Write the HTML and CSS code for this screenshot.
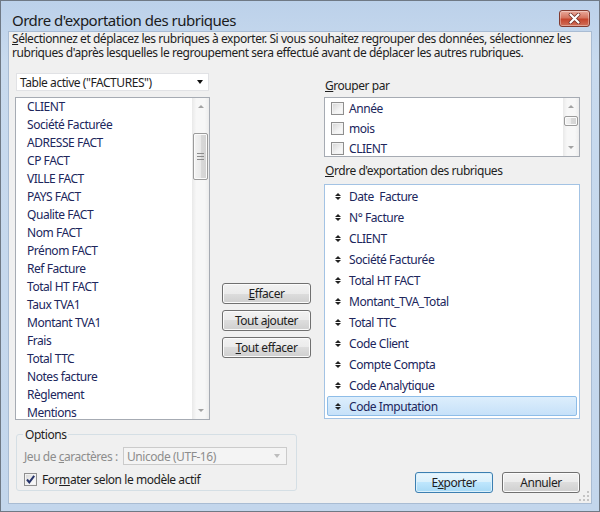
FILE: index.html
```html
<!DOCTYPE html>
<html lang="fr">
<head>
<meta charset="utf-8">
<title>Ordre d'exportation des rubriques</title>
<link rel="stylesheet" href="styles.css">
</head>
<body>
<div class="window">
  <div class="titlebar">
    <span class="title">Ordre d'exportation des rubriques</span>
    <div class="close">
      <svg width="13" height="11" viewBox="0 0 13 11"><path d="M2.5 1.5L10.5 9.5M10.5 1.5L2.5 9.5" stroke="#6b2b22" stroke-width="3.6" stroke-linecap="round"/><path d="M2.5 1.5L10.5 9.5M10.5 1.5L2.5 9.5" stroke="#ffffff" stroke-width="2.2" stroke-linecap="round"/></svg>
    </div>
  </div>
  <div class="client">
    <p class="desc"><u>S</u>électionnez et déplacez les rubriques à exporter. Si vous souhaitez regrouper des données, sélectionnez les<br>rubriques d'après lesquelles le regroupement sera effectué avant de déplacer les autres rubriques.</p>
    <div class="main">
      <div class="col-left">
        <div class="combo"><span>Table active ("FACTURES")</span><span class="combo-arrow"></span></div>
        <div class="list fields">
          <ul>
            <li>CLIENT</li>
            <li>Société Facturée</li>
            <li>ADRESSE FACT</li>
            <li>CP FACT</li>
            <li>VILLE FACT</li>
            <li>PAYS FACT</li>
            <li>Qualite FACT</li>
            <li>Nom FACT</li>
            <li>Prénom FACT</li>
            <li>Ref Facture</li>
            <li>Total HT FACT</li>
            <li>Taux TVA1</li>
            <li>Montant TVA1</li>
            <li>Frais</li>
            <li>Total TTC</li>
            <li>Notes facture</li>
            <li>Règlement</li>
            <li>Mentions</li>
          </ul>
          <div class="vscroll">
            <div class="sb-btn"><span class="tri-up"></span></div>
            <div class="sb-track big"><div class="thumb"><span class="grip"></span></div></div>
            <div class="sb-btn"><span class="tri-down"></span></div>
          </div>
        </div>
      </div>
      <div class="col-mid">
        <button class="btn"><u>E</u>ffacer</button>
        <button class="btn">Tout a<u>j</u>outer</button>
        <button class="btn"><u>T</u>out effacer</button>
      </div>
      <div class="col-right">
        <div class="lbl"><u>G</u>rouper par</div>
        <div class="list group">
          <ul>
            <li><span class="cb"></span>Année</li>
            <li><span class="cb"></span>mois</li>
            <li><span class="cb"></span>CLIENT</li>
          </ul>
          <div class="vscroll">
            <div class="sb-btn"><span class="tri-up"></span></div>
            <div class="sb-track small"><div class="thumb"></div></div>
            <div class="sb-btn"><span class="tri-down"></span></div>
          </div>
        </div>
        <div class="lbl lbl2"><u>O</u>rdre d'exportation des rubriques</div>
        <div class="list order">
          <ul>
            <li><span class="ud"></span>Date&nbsp; Facture</li>
            <li><span class="ud"></span>N° Facture</li>
            <li><span class="ud"></span>CLIENT</li>
            <li><span class="ud"></span>Société Facturée</li>
            <li><span class="ud"></span>Total HT FACT</li>
            <li><span class="ud"></span>Montant_TVA_Total</li>
            <li><span class="ud"></span>Total TTC</li>
            <li><span class="ud"></span>Code Client</li>
            <li><span class="ud"></span>Compte Compta</li>
            <li><span class="ud"></span>Code Analytique</li>
            <li class="sel"><span class="ud"></span>Code Imputation</li>
          </ul>
        </div>
      </div>
    </div>
    <div class="footer">
      <fieldset class="options">
        <legend>Options</legend>
        <div class="row">
          <span class="dis-label">Jeu de <u>c</u>aractères :</span>
          <div class="combo disabled"><span>Unicode (UTF-16)</span><span class="combo-arrow"></span></div>
        </div>
        <div class="row row2">
          <span class="cb checked"><svg width="11" height="11" viewBox="0 0 11 11"><path d="M2 5.5L4.3 8.3L9.2 1.8" fill="none" stroke="#27346a" stroke-width="2"/></svg></span>
          <span>For<u>m</u>ater selon le modèle actif</span>
        </div>
      </fieldset>
      <div class="actions">
        <button class="btn default">E<u>x</u>porter</button>
        <button class="btn">Annuler</button>
      </div>
    </div>
    <svg class="gripper" width="12" height="12" viewBox="0 0 12 12">
      <g fill="#c4c4c4"><rect x="9" y="1" width="2" height="2"/><rect x="5" y="5" width="2" height="2"/><rect x="9" y="5" width="2" height="2"/><rect x="1" y="9" width="2" height="2"/><rect x="5" y="9" width="2" height="2"/><rect x="9" y="9" width="2" height="2"/></g>
    </svg>
  </div>
</div>
</body>
</html>
```
FILE: styles.css
```css
* { box-sizing: border-box; }

body {
  margin: 0;
  font-family: "Noto Sans", "Open Sans", sans-serif;
  font-size: 12px;
  letter-spacing: -0.45px;
  color: #1e1e1e;
}

.window {
  width: 600px;
  height: 512px;
  border: 1px solid #6f7985;
  background: linear-gradient(#bcd1ea, #c8daee 60px, #c3d6ec);
  display: flex;
  flex-direction: column;
}

.titlebar {
  height: 30px;
  display: flex;
  align-items: flex-start;
  padding: 9px 9px 0 11px;
}

.title {
  font-size: 15px;
  line-height: 20px;
  letter-spacing: -0.5px;
  color: #1b1b1b;
}

.close {
  margin-left: auto;
  width: 31px;
  height: 17px;
  border: 1px solid #823b30;
  border-radius: 3px;
  background: linear-gradient(#e9a99b, #d57560 45%, #c5452d 55%, #d0705a);
  box-shadow: inset 0 0 0 1px rgba(255,255,255,0.35);
  display: flex;
  align-items: center;
  justify-content: center;
}

.client {
  position: relative;
  margin: 0 7px;
  height: 473px;
  background: #f0f0f0;
  border: 1px solid #a9bcd3;
}

.desc {
  margin: 0;
  padding-left: 3px;
  line-height: 14px;
  white-space: nowrap;
  color: #1e1e1e;
}

.main {
  display: flex;
  margin-top: 13px;
  padding-left: 6px;
}

.col-left {
  width: 195px;
  display: flex;
  flex-direction: column;
}

.combo {
  height: 18px;
  margin: 0 1px;
  background: #fff;
  border: 1px solid #e1e2e5;
  display: flex;
  align-items: center;
  padding-left: 3px;
  color: #1e1e1e;
  white-space: nowrap;
}

.combo-arrow {
  margin-left: auto;
  margin-right: 5px;
  width: 0;
  height: 0;
  border-left: 3.5px solid transparent;
  border-right: 3.5px solid transparent;
  border-top: 4px solid #111;
}

.list {
  background: #fff;
  border: 1px solid #a6abb3;
  display: flex;
  overflow: hidden;
}

.list ul {
  flex: 1;
  margin: 0;
  padding: 0;
  list-style: none;
  color: #20265c;
}

.fields {
  margin-top: 6px;
  height: 323px;
}

.fields ul { padding-left: 11px; }

.fields li {
  height: 18px;
  line-height: 18px;
  white-space: nowrap;
}

.vscroll {
  width: 17px;
  display: flex;
  flex-direction: column;
  background: linear-gradient(90deg, #e9e9e9, #f7f7f7 25%, #f7f7f7 75%, #ececec);
}

.group .vscroll { width: 16px; }

.sb-btn {
  height: 17px;
  display: flex;
  align-items: center;
  justify-content: center;
}

.tri-up, .tri-down {
  width: 0;
  height: 0;
  border-left: 3px solid transparent;
  border-right: 3px solid transparent;
}
.tri-up { border-bottom: 3px solid #a3a3a3; }
.tri-down { border-top: 3px solid #a3a3a3; }

.sb-track { flex: 1; }

.thumb {
  margin: 0 1px;
  border: 1px solid #9b9b9b;
  border-radius: 2px;
  background: linear-gradient(90deg, #f4f4f4, #e9e9e9 50%, #d9d9d9 51%, #d3d3d3);
  box-shadow: inset 0 0 0 1px #fbfbfb;
  display: flex;
  align-items: center;
  justify-content: center;
}

.big .thumb { margin-top: 18px; height: 47px; }
.small .thumb { margin-top: 1px; height: 10px; }

.grip {
  width: 7px;
  height: 7px;
  background: linear-gradient(#8c8c8c 0 1px, transparent 1px 3px, #8c8c8c 3px 4px, transparent 4px 6px, #8c8c8c 6px 7px);
}

.col-mid {
  width: 89px;
  margin-left: 12px;
  padding-top: 210px;
  display: flex;
  flex-direction: column;
  gap: 6px;
}

.btn {
  height: 21px;
  padding: 0;
  font: inherit;
  letter-spacing: inherit;
  color: #1e1e1e;
  border: 1px solid #707070;
  border-radius: 3px;
  background: linear-gradient(#f2f2f2, #ebebeb 50%, #dddddd 50%, #cfcfcf);
  box-shadow: inset 0 0 0 1px #fbfbfb;
}

.btn.default {
  border-color: #3c7fb1;
  background: linear-gradient(#eaf6fd, #d9f0fc 50%, #bee6fd 50%, #a7d9f5);
  box-shadow: inset 0 0 0 1px #dbf0fb;
}

.col-right {
  width: 256px;
  margin-left: 13px;
}

.lbl {
  height: 15px;
  line-height: 15px;
  margin-top: 5px;
  padding-left: 1px;
}

.lbl2 { margin-top: 6px; }

.group {
  margin-top: 4px;
  height: 60px;
}

.group li {
  height: 20px;
  display: flex;
  align-items: center;
  padding-left: 6px;
  white-space: nowrap;
}

.cb {
  width: 13px;
  height: 13px;
  border: 1px solid #8f8f8f;
  background: linear-gradient(135deg, #d4d4d4, #f3f3f3 60%, #fbfbfb);
  box-shadow: inset 0 0 0 1px #f2f2f2;
  margin-right: 5px;
  flex-shrink: 0;
}

.order {
  margin-top: 6px;
  height: 235px;
  border-color: #a3c3e4;
}

.order ul { padding: 1px 2px; }

.order li {
  height: 20px;
  margin-bottom: 1px;
  display: flex;
  align-items: center;
  padding-left: 8px;
  border: 1px solid transparent;
  border-radius: 2px;
  white-space: nowrap;
}

.order li.sel {
  background: linear-gradient(#ddeefc, #c6e1f9);
  border-color: #8ebde8;
}

.ud {
  width: 6px;
  margin-right: 8px;
  margin-left: -1px;
  display: flex;
  flex-direction: column;
  align-items: center;
  gap: 1px;
}
.ud::before, .ud::after {
  content: "";
  width: 0;
  height: 0;
  border-left: 3px solid transparent;
  border-right: 3px solid transparent;
}
.ud::before { border-bottom: 3px solid #222; }
.ud::after { border-top: 3px solid #222; }

.footer {
  display: flex;
  margin-top: 7px;
  padding-left: 7px;
}

.options {
  width: 281px;
  height: 64px;
  margin: 0;
  padding: 0 0 0 6px;
  border: 1px solid #d5dfe5;
  border-radius: 3px;
  min-inline-size: 0;
}

.options legend {
  padding: 0 2px;
  line-height: 15px;
  color: #1e1e1e;
}

.row {
  display: flex;
  align-items: center;
  padding-left: 1px;
  margin-top: 5px;
}

.row2 { margin-top: 6px; }

.dis-label {
  width: 99px;
  color: #8d8d8d;
  white-space: nowrap;
}

.combo.disabled {
  width: 164px;
  margin: 0;
  background: #f4f4f4;
  border-color: #cbcbcb;
  color: #8d8d8d;
}

.combo.disabled .combo-arrow { border-top-color: #bdbdbd; margin-right: 6px; }

.cb.checked {
  display: flex;
  align-items: center;
  justify-content: center;
}

.actions {
  margin-left: auto;
  padding: 45px 11px 0 0;
  display: flex;
  gap: 9px;
}

.actions .btn { width: 78px; }

.gripper {
  position: absolute;
  right: 1px;
  bottom: 1px;
}
```
